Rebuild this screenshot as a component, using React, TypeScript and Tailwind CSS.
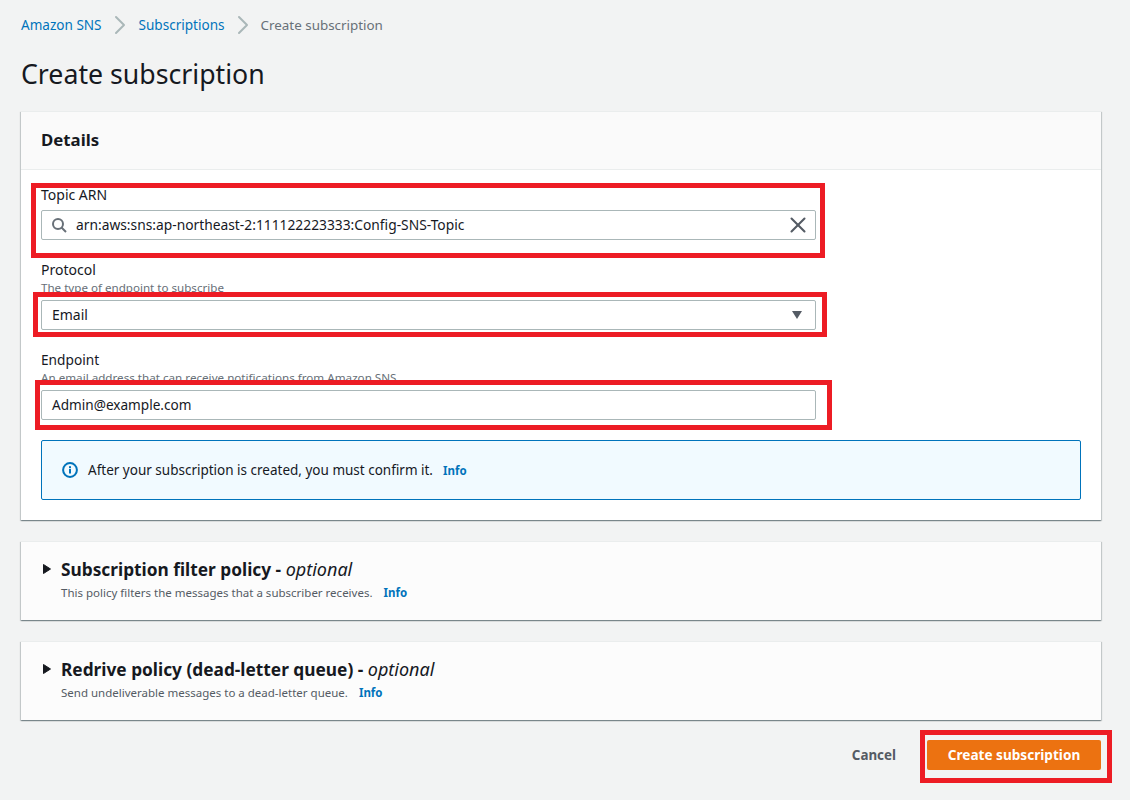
import { ChevronRight, X } from "lucide-react";

function Highlight({ className }: { className: string }) {
  return <div className={`absolute border-[5px] border-[#ed1c24] pointer-events-none ${className}`} />;
}

function InfoLink() {
  return <a className="text-[11.5px] leading-[16px] font-bold text-[#0073bb]">Info</a>;
}

function Caret() {
  return (
    <svg width="10" height="12" viewBox="0 0 10 12" className="mr-[9px] shrink-0">
      <path d="M1.5 1.5 L8.5 6 L1.5 10.5 Z" fill="#16191f" stroke="#16191f" strokeWidth="1" />
    </svg>
  );
}

function Optional({ title, desc }: { title: string; desc: string }) {
  return (
    <section className="mt-[21px] h-[79px] bg-[#fcfcfc] border-t border-[#eaeded] shadow-[0_1px_1px_0_rgba(0,28,36,0.3),1px_1px_1px_0_rgba(0,28,36,0.15),-1px_1px_1px_0_rgba(0,28,36,0.15)] px-[21px] pt-[15px]">
      <div className="flex items-center h-[24px]">
        <Caret />
        <h2 className="text-[17.3px] leading-[24px] font-bold text-[#16191f]">
          {title} - <i className="text-[18px] font-normal">optional</i>
        </h2>
      </div>
      <div className="flex items-center gap-[11px] pl-[19px] h-[24px] text-[11.5px] text-[#545b64]">
        <span>{desc}</span>
        <InfoLink />
      </div>
    </section>
  );
}

export default function App() {
  return (
    <div className="relative w-[1130px] h-[800px] overflow-hidden bg-[#f2f3f3] font-['Noto_Sans','Open_Sans',sans-serif] text-[14px] text-[#16191f]">
      <div className="pl-[21px] pr-[29px]">
        {/* Breadcrumb */}
        <nav className="flex items-center h-[20px] mt-[15px] text-[13.55px]">
          <a className="text-[#0073bb]">Amazon SNS</a>
          <ChevronRight size={32} strokeWidth={1.5} className="mx-[2.5px] text-[#aab7b8]" />
          <a className="text-[#0073bb]">Subscriptions</a>
          <ChevronRight size={32} strokeWidth={1.5} className="mx-[2px] text-[#aab7b8]" />
          <span className="text-[13.4px] text-[#687078]">Create subscription</span>
        </nav>

        <h1 className="mt-[19px] h-[40px] text-[26.7px] leading-[40px] font-normal text-[#16191f]">Create subscription</h1>

        {/* Details */}
        <section className="mt-[17px] bg-white border-t border-[#eaeded] shadow-[0_1px_1px_0_rgba(0,28,36,0.3),1px_1px_1px_0_rgba(0,28,36,0.15),-1px_1px_1px_0_rgba(0,28,36,0.15)]">
          <div className="h-[58px] bg-[#fafafa] border-b border-[#eaeded] px-[20px] pt-[16px]">
            <h2 className="text-[16.8px] leading-[24px] font-bold">Details</h2>
          </div>
          <div className="px-[20px] pt-[15px] h-[350px]">
            <label className="block h-[20px] leading-[20px] mb-[5px]">Topic ARN</label>
            <div className="flex items-center w-[775px] h-[30px] border border-[#aab7b8] rounded-[2px] bg-white pl-[9px] pr-[4px]">
              <svg width="16" height="16" viewBox="0 0 16 16" fill="none" stroke="#687078" strokeWidth="2" className="mr-[9px] shrink-0">
                <circle cx="7" cy="7" r="5" />
                <path d="M10.5 10.5 L15 15" />
              </svg>
              <span className="flex-1 text-[13.8px] text-[#16191f]">arn:aws:sns:ap-northeast-2:111122223333:Config-SNS-Topic</span>
              <X size={26} strokeWidth={1.9} className="text-[#545b64]" />
            </div>

            <label className="block mt-[20px] h-[20px] leading-[20px]">Protocol</label>
            <p className="h-[16px] leading-[16px] text-[11.6px] text-[#687078]">The type of endpoint to subscribe</p>
            <div className="flex items-center justify-between mt-[4px] w-[775px] h-[30px] border border-[#aab7b8] rounded-[2px] bg-white pl-[10px] pr-[13px]">
              <span className="pb-[2px]">Email</span>
              <svg width="10" height="8" viewBox="0 0 10 8">
                <path d="M0 0 H10 L5 8 Z" fill="#545b64" />
              </svg>
            </div>

            <label className="block mt-[20px] h-[20px] leading-[20px] text-[13.7px]">Endpoint</label>
            <p className="h-[16px] leading-[16px] text-[11.65px] text-[#687078]">An email address that can receive notifications from Amazon SNS.</p>
            <div className="flex items-center mt-[4px] w-[775px] h-[30px] border border-[#aab7b8] rounded-[2px] bg-white pl-[10px]">
              <span className="text-[13.6px]">Admin@example.com</span>
            </div>

            <div className="flex items-center mt-[20px] w-[1040px] h-[60px] border border-[#0073bb] rounded-[2px] bg-[#f1faff] pl-[20px]">
              <svg width="16" height="16" viewBox="0 0 16 16" className="mr-[10px] shrink-0">
                <circle cx="8" cy="8" r="6.9" fill="none" stroke="#0073bb" strokeWidth="2" />
                <rect x="7" y="7" width="2" height="4.5" fill="#0073bb" />
                <rect x="7" y="4.2" width="2" height="2" fill="#0073bb" />
              </svg>
              <span className="mr-[10px] text-[13.5px]">After your subscription is created, you must confirm it.</span>
              <span className="pt-[2px] leading-[16px] flex">
                <InfoLink />
              </span>
            </div>
          </div>
        </section>

        <Optional title="Subscription filter policy" desc="This policy filters the messages that a subscriber receives." />
        <Optional title="Redrive policy (dead-letter queue)" desc="Send undeliverable messages to a dead-letter queue." />

        {/* Actions */}
        <div className="flex items-center justify-end mt-[20px] gap-[31px]">
          <button className="font-bold text-[#545b64] text-[13.4px]">Cancel</button>
          <button className="w-[174px] h-[30px] rounded-[2px] bg-[#ec7211] text-white font-bold text-[13.6px]">Create subscription</button>
        </div>
      </div>

      {/* Red annotation boxes */}
      <Highlight className="left-[31px] top-[183px] w-[794px] h-[75px]" />
      <Highlight className="left-[33px] top-[292px] w-[794px] h-[45px]" />
      <Highlight className="left-[35px] top-[380px] w-[797px] h-[50px]" />
      <Highlight className="left-[920px] top-[730px] w-[192px] h-[53px]" />
    </div>
  );
}
